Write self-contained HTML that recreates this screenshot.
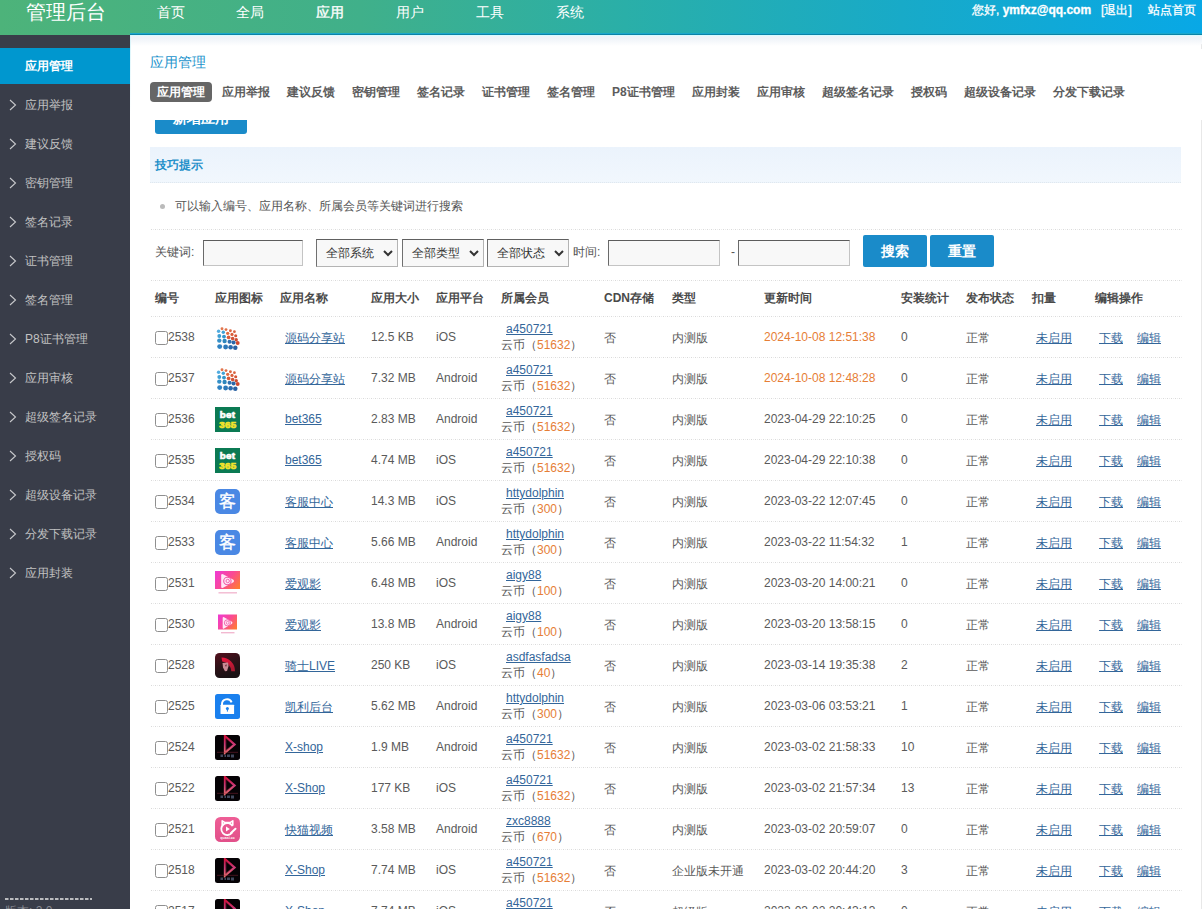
<!DOCTYPE html>
<html><head><meta charset="utf-8"><style>
*{box-sizing:border-box}
html,body{margin:0;padding:0;width:1202px;height:909px;overflow:hidden;background:#fff;font-family:"Liberation Sans",sans-serif;font-size:12px;color:#444}
.hd{position:absolute;left:0;top:0;width:1202px;height:35px;background:linear-gradient(90deg,#4db37a 0%,#40b08a 30%,#2aafa8 52%,#18aac8 75%,#08a8e6 100%)}
.hdline{position:absolute;left:130px;top:33px;width:1072px;height:2px;background:linear-gradient(#1aa8cc 0 1px,#0b82a6 1px 2px)}
.logo{position:absolute;left:26px;top:-1px;font-size:20px;line-height:26px;color:#fff}
.nav{position:absolute;top:4px;font-size:14px;line-height:16px;color:#fff}
.usr{position:absolute;top:2px;left:972px;font-size:12px;line-height:16px;color:#fff;white-space:nowrap;-webkit-text-stroke:0.3px #fff}
.sb{position:absolute;left:0;top:35px;width:130px;height:874px;background:#393d49}
.sact{position:absolute;left:0;top:48px;width:130px;height:36px;background:#0097cf;color:#fff;font-weight:bold;font-size:12px;line-height:37px;padding-left:25px}
.si{position:absolute;left:0;width:130px;height:17px;line-height:18px;font-size:12px;color:#c2c2c2;white-space:nowrap}
.si .arr{position:absolute;left:9px;top:3px}
.si span{position:absolute;left:25px;top:0}
.dash{position:absolute;left:4px;top:897px;width:90px;height:4px}
.ver{position:absolute;left:5px;top:903px;font-size:12px;line-height:17px;color:#8a8c94}
.ct{position:absolute;left:130px;top:35px;width:1072px;height:874px;background:#fff}
.shadow{position:absolute;left:130px;top:35px;width:1072px;height:14px;background:linear-gradient(#d8fbff 0 1px,#eef3f8 1px,#f0f4f9 4px,rgba(255,255,255,0) 11px)}
.ledge{position:absolute;left:130px;top:35px;width:1px;height:80px;background:linear-gradient(#d8f4fa,rgba(230,248,252,0))}
.rline{position:absolute;left:1201px;top:44px;width:1px;height:865px;background:#e8e8e8}
.addbtn{position:absolute;left:155px;top:102px;width:92px;height:32px;border-radius:3px;background:#1a8bc9;color:#fff;font-weight:bold;font-size:14px;line-height:32px;text-align:center}
.fix{position:absolute;left:130px;top:35px;width:1072px;height:85px;background:transparent}
.fixbg{position:absolute;left:130px;top:49px;width:1072px;height:71px;background:#fff}
.title{position:absolute;left:150px;top:53px;font-size:14px;line-height:18px;color:#1b93cc}
.tabs{position:absolute;left:150px;top:82px;white-space:nowrap;font-size:0}
.tab{display:inline-block;height:20px;line-height:21px;padding:0 7px;margin-right:3px;font-size:12px;font-weight:bold;color:#5c5c5c;border-radius:4px}
.tab.act{background:#666;color:#fff}
.tip{position:absolute;left:150px;top:147px;width:1031px;height:36px;background:linear-gradient(#ebf3fc,#f1f7fd);border-bottom:1px dotted #e0e8ee}
.tip span{position:absolute;left:5px;top:10px;font-weight:bold;color:#1e8fc9;font-size:12px;line-height:17px}
.bullet{position:absolute;left:160px;top:204px;width:5px;height:5px;border-radius:50%;background:#bbb}
.tiptext{position:absolute;left:175px;top:198px;line-height:17px;color:#555}
.dl{position:absolute;left:150px;width:1033px;height:1px;background:repeating-linear-gradient(90deg,transparent 0 1px,#d9d9d9 1px 2px,transparent 2px 3px,#ebebeb 3px 4px)}
.lbl{position:absolute;line-height:17px;color:#555}
.inp{position:absolute;top:240px;height:26px;background:#f8f8f8;border:1px solid #c4c4c4;border-top-color:#5c5c5c;border-left-color:#6a6a6a}
.sel{position:absolute;top:239px;height:28px;width:82px;background:#f8f8f8;border:1px solid #b4b4b4;border-top-color:#606060;border-left-color:#707070;font-size:12px;line-height:26px;padding-left:9px;color:#333}
.sel svg{position:absolute;right:4px;top:10px}
.btn{position:absolute;top:235px;width:64px;height:32px;background:#1a8bc9;border-radius:2px;color:#fff;font-size:14px;font-weight:bold;line-height:32px;text-align:center}
.th{position:absolute;top:290px;line-height:17px;font-weight:bold;color:#4a4a4a}
.c{position:absolute;line-height:17px;white-space:nowrap;color:#5a5a5a}
.lk{color:#33669a;text-decoration:underline}
.or{color:#e67e36}
.mem{line-height:16px}
.cb{position:absolute;left:155px;width:13px;height:14px;border:1px solid #8f8f8f;border-radius:2.5px;background:#fff}
.ic{position:absolute;left:215px}
</style></head><body>
<div class="hd"></div>
<div class="hdline"></div>
<div class="logo">管理后台</div>
<div class="nav" style="left:157px">首页</div>
<div class="nav" style="left:236px">全局</div>
<div class="nav" style="left:316px;-webkit-text-stroke:0.35px #fff">应用</div>
<div class="nav" style="left:396px">用户</div>
<div class="nav" style="left:476px">工具</div>
<div class="nav" style="left:556px">系统</div>
<div class="usr">您好, <b>ymfxz@qq.com</b>&nbsp;&nbsp;&nbsp;[退出]&nbsp;&nbsp;&nbsp;&nbsp;&nbsp;站点首页</div>
<div class="sb"></div>
<div class="sact">应用管理</div>
<div class="si" style="top:96px"><svg class="arr" width="8" height="12" viewBox="0 0 8 12"><path d="M1 1 L6.5 6 L1 11" fill="none" stroke="#c8c9cc" stroke-width="1.1"/></svg><span>应用举报</span></div><div class="si" style="top:135px"><svg class="arr" width="8" height="12" viewBox="0 0 8 12"><path d="M1 1 L6.5 6 L1 11" fill="none" stroke="#c8c9cc" stroke-width="1.1"/></svg><span>建议反馈</span></div><div class="si" style="top:174px"><svg class="arr" width="8" height="12" viewBox="0 0 8 12"><path d="M1 1 L6.5 6 L1 11" fill="none" stroke="#c8c9cc" stroke-width="1.1"/></svg><span>密钥管理</span></div><div class="si" style="top:213px"><svg class="arr" width="8" height="12" viewBox="0 0 8 12"><path d="M1 1 L6.5 6 L1 11" fill="none" stroke="#c8c9cc" stroke-width="1.1"/></svg><span>签名记录</span></div><div class="si" style="top:252px"><svg class="arr" width="8" height="12" viewBox="0 0 8 12"><path d="M1 1 L6.5 6 L1 11" fill="none" stroke="#c8c9cc" stroke-width="1.1"/></svg><span>证书管理</span></div><div class="si" style="top:291px"><svg class="arr" width="8" height="12" viewBox="0 0 8 12"><path d="M1 1 L6.5 6 L1 11" fill="none" stroke="#c8c9cc" stroke-width="1.1"/></svg><span>签名管理</span></div><div class="si" style="top:330px"><svg class="arr" width="8" height="12" viewBox="0 0 8 12"><path d="M1 1 L6.5 6 L1 11" fill="none" stroke="#c8c9cc" stroke-width="1.1"/></svg><span>P8证书管理</span></div><div class="si" style="top:369px"><svg class="arr" width="8" height="12" viewBox="0 0 8 12"><path d="M1 1 L6.5 6 L1 11" fill="none" stroke="#c8c9cc" stroke-width="1.1"/></svg><span>应用审核</span></div><div class="si" style="top:408px"><svg class="arr" width="8" height="12" viewBox="0 0 8 12"><path d="M1 1 L6.5 6 L1 11" fill="none" stroke="#c8c9cc" stroke-width="1.1"/></svg><span>超级签名记录</span></div><div class="si" style="top:447px"><svg class="arr" width="8" height="12" viewBox="0 0 8 12"><path d="M1 1 L6.5 6 L1 11" fill="none" stroke="#c8c9cc" stroke-width="1.1"/></svg><span>授权码</span></div><div class="si" style="top:486px"><svg class="arr" width="8" height="12" viewBox="0 0 8 12"><path d="M1 1 L6.5 6 L1 11" fill="none" stroke="#c8c9cc" stroke-width="1.1"/></svg><span>超级设备记录</span></div><div class="si" style="top:525px"><svg class="arr" width="8" height="12" viewBox="0 0 8 12"><path d="M1 1 L6.5 6 L1 11" fill="none" stroke="#c8c9cc" stroke-width="1.1"/></svg><span>分发下载记录</span></div><div class="si" style="top:564px"><svg class="arr" width="8" height="12" viewBox="0 0 8 12"><path d="M1 1 L6.5 6 L1 11" fill="none" stroke="#c8c9cc" stroke-width="1.1"/></svg><span>应用封装</span></div>
<svg class="dash" width="90" height="4" viewBox="0 0 90 4"><line x1="1" y1="2" x2="88" y2="2" stroke="#e6e6e6" stroke-width="1.7" stroke-dasharray="3.5 1.5"/></svg><div class="ver">版本: 2.0</div>
<div class="ct"></div>
<div class="rline"></div>
<div class="addbtn">新增应用</div>
<div class="fixbg"></div>
<div class="shadow"></div><div class="ledge"></div>
<div class="title">应用管理</div>
<div class="tabs"><span class="tab act">应用管理</span><span class="tab">应用举报</span><span class="tab">建议反馈</span><span class="tab">密钥管理</span><span class="tab">签名记录</span><span class="tab">证书管理</span><span class="tab">签名管理</span><span class="tab">P8证书管理</span><span class="tab">应用封装</span><span class="tab">应用审核</span><span class="tab">超级签名记录</span><span class="tab">授权码</span><span class="tab">超级设备记录</span><span class="tab">分发下载记录</span></div>
<div class="tip"><span>技巧提示</span></div>
<div class="bullet"></div>
<div class="tiptext">可以输入编号、应用名称、所属会员等关键词进行搜索</div>
<div class="dl" style="top:229px"></div>
<div class="lbl" style="left:155px;top:244px">关键词:</div>
<div class="inp" style="left:203px;width:100px"></div>
<div class="sel" style="left:316px">全部系统<svg width="10" height="7" viewBox="0 0 10 7"><path d="M1 1 L5 5 L9 1" fill="none" stroke="#333" stroke-width="2"/></svg></div>
<div class="sel" style="left:402px">全部类型<svg width="10" height="7" viewBox="0 0 10 7"><path d="M1 1 L5 5 L9 1" fill="none" stroke="#333" stroke-width="2"/></svg></div>
<div class="sel" style="left:487px">全部状态<svg width="10" height="7" viewBox="0 0 10 7"><path d="M1 1 L5 5 L9 1" fill="none" stroke="#333" stroke-width="2"/></svg></div>
<div class="lbl" style="left:573px;top:244px">时间:</div>
<div class="inp" style="left:608px;width:112px"></div>
<div class="lbl" style="left:731px;top:244px">-</div>
<div class="inp" style="left:738px;width:112px"></div>
<div class="btn" style="left:863px">搜索</div>
<div class="btn" style="left:930px">重置</div>
<div class="dl" style="top:280px"></div>
<div class="th" style="left:155px">编号</div>
<div class="th" style="left:215px">应用图标</div>
<div class="th" style="left:280px">应用名称</div>
<div class="th" style="left:371px">应用大小</div>
<div class="th" style="left:436px">应用平台</div>
<div class="th" style="left:501px">所属会员</div>
<div class="th" style="left:604px">CDN存储</div>
<div class="th" style="left:672px">类型</div>
<div class="th" style="left:764px">更新时间</div>
<div class="th" style="left:901px">安装统计</div>
<div class="th" style="left:966px">发布状态</div>
<div class="th" style="left:1032px">扣量</div>
<div class="th" style="left:1095px">编辑操作</div>
<div class="dl" style="top:316px"></div>
<div class="cb" style="top:331px"></div>
<div class="c" style="left:168px;top:329px">2538</div>
<svg class="ic" style="top:325px" width="25" height="25" viewBox="0 0 25 25"><circle cx="7.00" cy="3.70" r="1.44" fill="#e2764e"/><circle cx="11.00" cy="4.60" r="1.44" fill="#df6f48"/><circle cx="15.40" cy="5.70" r="1.44" fill="#dc6842"/><circle cx="19.40" cy="6.70" r="1.38" fill="#d9623e"/><circle cx="3.60" cy="6.30" r="1.72" fill="#52ace0"/><circle cx="8.30" cy="7.30" r="1.72" fill="#42a2d6"/><circle cx="12.70" cy="8.30" r="1.67" fill="#e06a40"/><circle cx="17.00" cy="9.40" r="1.61" fill="#db5f3a"/><circle cx="20.70" cy="10.70" r="1.55" fill="#d65637"/><circle cx="4.30" cy="11.00" r="1.95" fill="#3c9ed4"/><circle cx="9.00" cy="11.60" r="1.95" fill="#3596ca"/><circle cx="13.60" cy="12.30" r="1.84" fill="#d85a38"/><circle cx="17.60" cy="13.60" r="1.78" fill="#d15236"/><circle cx="21.20" cy="14.70" r="1.72" fill="#cc4b31"/><circle cx="4.30" cy="15.60" r="2.18" fill="#3590c8"/><circle cx="9.60" cy="16.00" r="2.18" fill="#2e86bc"/><circle cx="14.60" cy="16.70" r="2.07" fill="#2f70b0"/><circle cx="18.60" cy="17.40" r="2.01" fill="#2c67a8"/><circle cx="22.70" cy="18.00" r="1.95" fill="#d04a30"/><circle cx="4.70" cy="21.60" r="2.47" fill="#2f82c2"/><circle cx="10.60" cy="22.00" r="2.42" fill="#2c78b8"/><circle cx="15.60" cy="22.30" r="2.30" fill="#2b6aac"/><circle cx="20.30" cy="22.70" r="2.24" fill="#2a62a4"/></svg>
<a class="c lk" style="left:285px;top:330px">源码分享站</a>
<div class="c" style="left:371px;top:329px">12.5 KB</div>
<div class="c" style="left:436px;top:329px">iOS</div>
<div class="c mem" style="left:501px;top:321px"><a class="lk" style="margin-left:5px">a450721</a><br>云币（<span class="or">51632</span>）</div>
<div class="c" style="left:604px;top:330px">否</div>
<div class="c" style="left:672px;top:330px">内测版</div>
<div class="c or" style="left:764px;top:329px">2024-10-08 12:51:38</div>
<div class="c" style="left:901px;top:329px">0</div>
<div class="c" style="left:966px;top:330px">正常</div>
<a class="c lk" style="left:1036px;top:330px">未启用</a>
<a class="c lk" style="left:1099px;top:330px">下载</a>
<a class="c lk" style="left:1137px;top:330px">编辑</a>
<div class="dl" style="top:357px"></div><div class="cb" style="top:372px"></div>
<div class="c" style="left:168px;top:370px">2537</div>
<svg class="ic" style="top:366px" width="25" height="25" viewBox="0 0 25 25"><circle cx="7.00" cy="3.70" r="1.44" fill="#e2764e"/><circle cx="11.00" cy="4.60" r="1.44" fill="#df6f48"/><circle cx="15.40" cy="5.70" r="1.44" fill="#dc6842"/><circle cx="19.40" cy="6.70" r="1.38" fill="#d9623e"/><circle cx="3.60" cy="6.30" r="1.72" fill="#52ace0"/><circle cx="8.30" cy="7.30" r="1.72" fill="#42a2d6"/><circle cx="12.70" cy="8.30" r="1.67" fill="#e06a40"/><circle cx="17.00" cy="9.40" r="1.61" fill="#db5f3a"/><circle cx="20.70" cy="10.70" r="1.55" fill="#d65637"/><circle cx="4.30" cy="11.00" r="1.95" fill="#3c9ed4"/><circle cx="9.00" cy="11.60" r="1.95" fill="#3596ca"/><circle cx="13.60" cy="12.30" r="1.84" fill="#d85a38"/><circle cx="17.60" cy="13.60" r="1.78" fill="#d15236"/><circle cx="21.20" cy="14.70" r="1.72" fill="#cc4b31"/><circle cx="4.30" cy="15.60" r="2.18" fill="#3590c8"/><circle cx="9.60" cy="16.00" r="2.18" fill="#2e86bc"/><circle cx="14.60" cy="16.70" r="2.07" fill="#2f70b0"/><circle cx="18.60" cy="17.40" r="2.01" fill="#2c67a8"/><circle cx="22.70" cy="18.00" r="1.95" fill="#d04a30"/><circle cx="4.70" cy="21.60" r="2.47" fill="#2f82c2"/><circle cx="10.60" cy="22.00" r="2.42" fill="#2c78b8"/><circle cx="15.60" cy="22.30" r="2.30" fill="#2b6aac"/><circle cx="20.30" cy="22.70" r="2.24" fill="#2a62a4"/></svg>
<a class="c lk" style="left:285px;top:371px">源码分享站</a>
<div class="c" style="left:371px;top:370px">7.32 MB</div>
<div class="c" style="left:436px;top:370px">Android</div>
<div class="c mem" style="left:501px;top:362px"><a class="lk" style="margin-left:5px">a450721</a><br>云币（<span class="or">51632</span>）</div>
<div class="c" style="left:604px;top:371px">否</div>
<div class="c" style="left:672px;top:371px">内测版</div>
<div class="c or" style="left:764px;top:370px">2024-10-08 12:48:28</div>
<div class="c" style="left:901px;top:370px">0</div>
<div class="c" style="left:966px;top:371px">正常</div>
<a class="c lk" style="left:1036px;top:371px">未启用</a>
<a class="c lk" style="left:1099px;top:371px">下载</a>
<a class="c lk" style="left:1137px;top:371px">编辑</a>
<div class="dl" style="top:398px"></div><div class="cb" style="top:413px"></div>
<div class="c" style="left:168px;top:411px">2536</div>
<svg class="ic" style="top:407px" width="25" height="25" viewBox="0 0 25 25"><rect width="25" height="25" fill="#0b7a53"/><text x="12.6" y="11.2" text-anchor="middle" font-family="Liberation Sans" font-weight="bold" font-size="9.8" fill="#fff" stroke="#fff" stroke-width="0.7" letter-spacing="0.4">bet</text><text x="12.9" y="21" text-anchor="middle" font-family="Liberation Sans" font-weight="bold" font-size="9.8" fill="#f3e52b" stroke="#f3e52b" stroke-width="0.7" letter-spacing="0.4">365</text></svg>
<a class="c lk" style="left:285px;top:411px">bet365</a>
<div class="c" style="left:371px;top:411px">2.83 MB</div>
<div class="c" style="left:436px;top:411px">Android</div>
<div class="c mem" style="left:501px;top:403px"><a class="lk" style="margin-left:5px">a450721</a><br>云币（<span class="or">51632</span>）</div>
<div class="c" style="left:604px;top:412px">否</div>
<div class="c" style="left:672px;top:412px">内测版</div>
<div class="c" style="left:764px;top:411px">2023-04-29 22:10:25</div>
<div class="c" style="left:901px;top:411px">0</div>
<div class="c" style="left:966px;top:412px">正常</div>
<a class="c lk" style="left:1036px;top:412px">未启用</a>
<a class="c lk" style="left:1099px;top:412px">下载</a>
<a class="c lk" style="left:1137px;top:412px">编辑</a>
<div class="dl" style="top:439px"></div><div class="cb" style="top:454px"></div>
<div class="c" style="left:168px;top:452px">2535</div>
<svg class="ic" style="top:448px" width="25" height="25" viewBox="0 0 25 25"><rect width="25" height="25" fill="#0b7a53"/><text x="12.6" y="11.2" text-anchor="middle" font-family="Liberation Sans" font-weight="bold" font-size="9.8" fill="#fff" stroke="#fff" stroke-width="0.7" letter-spacing="0.4">bet</text><text x="12.9" y="21" text-anchor="middle" font-family="Liberation Sans" font-weight="bold" font-size="9.8" fill="#f3e52b" stroke="#f3e52b" stroke-width="0.7" letter-spacing="0.4">365</text></svg>
<a class="c lk" style="left:285px;top:452px">bet365</a>
<div class="c" style="left:371px;top:452px">4.74 MB</div>
<div class="c" style="left:436px;top:452px">iOS</div>
<div class="c mem" style="left:501px;top:444px"><a class="lk" style="margin-left:5px">a450721</a><br>云币（<span class="or">51632</span>）</div>
<div class="c" style="left:604px;top:453px">否</div>
<div class="c" style="left:672px;top:453px">内测版</div>
<div class="c" style="left:764px;top:452px">2023-04-29 22:10:38</div>
<div class="c" style="left:901px;top:452px">0</div>
<div class="c" style="left:966px;top:453px">正常</div>
<a class="c lk" style="left:1036px;top:453px">未启用</a>
<a class="c lk" style="left:1099px;top:453px">下载</a>
<a class="c lk" style="left:1137px;top:453px">编辑</a>
<div class="dl" style="top:480px"></div><div class="cb" style="top:495px"></div>
<div class="c" style="left:168px;top:493px">2534</div>
<svg class="ic" style="top:489px" width="25" height="25" viewBox="0 0 25 25"><rect width="25" height="25" rx="5" fill="#4a88e4"/><text x="12.5" y="18.3" text-anchor="middle" font-size="17" fill="#fff" stroke="#fff" stroke-width="0.35">客</text></svg>
<a class="c lk" style="left:285px;top:494px">客服中心</a>
<div class="c" style="left:371px;top:493px">14.3 MB</div>
<div class="c" style="left:436px;top:493px">iOS</div>
<div class="c mem" style="left:501px;top:485px"><a class="lk" style="margin-left:5px">httydolphin</a><br>云币（<span class="or">300</span>）</div>
<div class="c" style="left:604px;top:494px">否</div>
<div class="c" style="left:672px;top:494px">内测版</div>
<div class="c" style="left:764px;top:493px">2023-03-22 12:07:45</div>
<div class="c" style="left:901px;top:493px">0</div>
<div class="c" style="left:966px;top:494px">正常</div>
<a class="c lk" style="left:1036px;top:494px">未启用</a>
<a class="c lk" style="left:1099px;top:494px">下载</a>
<a class="c lk" style="left:1137px;top:494px">编辑</a>
<div class="dl" style="top:521px"></div><div class="cb" style="top:536px"></div>
<div class="c" style="left:168px;top:534px">2533</div>
<svg class="ic" style="top:530px" width="25" height="25" viewBox="0 0 25 25"><rect width="25" height="25" rx="5" fill="#4a88e4"/><text x="12.5" y="18.3" text-anchor="middle" font-size="17" fill="#fff" stroke="#fff" stroke-width="0.35">客</text></svg>
<a class="c lk" style="left:285px;top:535px">客服中心</a>
<div class="c" style="left:371px;top:534px">5.66 MB</div>
<div class="c" style="left:436px;top:534px">Android</div>
<div class="c mem" style="left:501px;top:526px"><a class="lk" style="margin-left:5px">httydolphin</a><br>云币（<span class="or">300</span>）</div>
<div class="c" style="left:604px;top:535px">否</div>
<div class="c" style="left:672px;top:535px">内测版</div>
<div class="c" style="left:764px;top:534px">2023-03-22 11:54:32</div>
<div class="c" style="left:901px;top:534px">1</div>
<div class="c" style="left:966px;top:535px">正常</div>
<a class="c lk" style="left:1036px;top:535px">未启用</a>
<a class="c lk" style="left:1099px;top:535px">下载</a>
<a class="c lk" style="left:1137px;top:535px">编辑</a>
<div class="dl" style="top:562px"></div><div class="cb" style="top:577px"></div>
<div class="c" style="left:168px;top:575px">2531</div>
<svg class="ic" style="top:571px" width="25" height="25" viewBox="0 0 25 25"><defs><linearGradient id="gagy" x1="0" y1="0.2" x2="1" y2="0.8"><stop offset="0" stop-color="#f03ccc"/><stop offset="0.5" stop-color="#fa4a94"/><stop offset="1" stop-color="#ff7a34"/></linearGradient></defs><rect x="0" y="0" width="25" height="18" fill="url(#gagy)"/><path d="M6.20 4.20 Q6.20 2.40 8.00 3.20 L18.40 8.80 Q19.80 10.00 18.40 11.20 L8.00 16.80 Q6.20 17.60 6.20 15.80 Z" fill="#ffe8f6"/><circle cx="12.40" cy="10.00" r="3.70" fill="none" stroke="#f25aa8" stroke-width="1.10"/><circle cx="12.70" cy="10.00" r="1.70" fill="none" stroke="#f25aa8" stroke-width="0.90"/><rect x="3.5" y="21.3" width="18.5" height="1.1" fill="#e888b0" opacity="0.75"/></svg>
<a class="c lk" style="left:285px;top:576px">爱观影</a>
<div class="c" style="left:371px;top:575px">6.48 MB</div>
<div class="c" style="left:436px;top:575px">iOS</div>
<div class="c mem" style="left:501px;top:567px"><a class="lk" style="margin-left:5px">aigy88</a><br>云币（<span class="or">100</span>）</div>
<div class="c" style="left:604px;top:576px">否</div>
<div class="c" style="left:672px;top:576px">内测版</div>
<div class="c" style="left:764px;top:575px">2023-03-20 14:00:21</div>
<div class="c" style="left:901px;top:575px">0</div>
<div class="c" style="left:966px;top:576px">正常</div>
<a class="c lk" style="left:1036px;top:576px">未启用</a>
<a class="c lk" style="left:1099px;top:576px">下载</a>
<a class="c lk" style="left:1137px;top:576px">编辑</a>
<div class="dl" style="top:603px"></div><div class="cb" style="top:618px"></div>
<div class="c" style="left:168px;top:616px">2530</div>
<svg class="ic" style="top:612px" width="25" height="25" viewBox="0 0 25 25"><defs><linearGradient id="gagy2" x1="0" y1="0.2" x2="1" y2="0.8"><stop offset="0" stop-color="#f03ccc"/><stop offset="0.5" stop-color="#fa4a94"/><stop offset="1" stop-color="#ff7a34"/></linearGradient></defs><rect x="3" y="2.5" width="19" height="15" fill="url(#gagy2)"/><path d="M7.71 6.00 Q7.71 4.50 9.08 5.17 L16.98 9.83 Q18.05 10.83 16.98 11.83 L9.08 16.50 Q7.71 17.17 7.71 15.67 Z" fill="#ffe8f6"/><circle cx="12.42" cy="10.83" r="3.08" fill="none" stroke="#f25aa8" stroke-width="0.92"/><circle cx="12.67" cy="10.83" r="1.42" fill="none" stroke="#f25aa8" stroke-width="0.75"/><rect x="6" y="20.2" width="13.5" height="1.1" fill="#e888b0" opacity="0.75"/></svg>
<a class="c lk" style="left:285px;top:617px">爱观影</a>
<div class="c" style="left:371px;top:616px">13.8 MB</div>
<div class="c" style="left:436px;top:616px">Android</div>
<div class="c mem" style="left:501px;top:608px"><a class="lk" style="margin-left:5px">aigy88</a><br>云币（<span class="or">100</span>）</div>
<div class="c" style="left:604px;top:617px">否</div>
<div class="c" style="left:672px;top:617px">内测版</div>
<div class="c" style="left:764px;top:616px">2023-03-20 13:58:15</div>
<div class="c" style="left:901px;top:616px">0</div>
<div class="c" style="left:966px;top:617px">正常</div>
<a class="c lk" style="left:1036px;top:617px">未启用</a>
<a class="c lk" style="left:1099px;top:617px">下载</a>
<a class="c lk" style="left:1137px;top:617px">编辑</a>
<div class="dl" style="top:644px"></div><div class="cb" style="top:659px"></div>
<div class="c" style="left:168px;top:657px">2528</div>
<svg class="ic" style="top:653px" width="25" height="25" viewBox="0 0 25 25"><defs><linearGradient id="gk" x1="0" y1="0" x2="0.4" y2="1"><stop offset="0" stop-color="#54101e"/><stop offset="0.6" stop-color="#2a1217"/><stop offset="1" stop-color="#1a1214"/></linearGradient><linearGradient id="gk2" x1="0" y1="0" x2="0.3" y2="1"><stop offset="0" stop-color="#f0143e"/><stop offset="1" stop-color="#a81a30"/></linearGradient></defs><rect width="25" height="25" rx="4.5" fill="url(#gk)"/><path d="M6.5 4.6 A13.5 13.5 0 0 1 20 18.2 L16.3 18.2 A10 10 0 0 0 7.2 8.6 Z" fill="url(#gk2)"/><path d="M7.5 10 L13 9.6 L13.6 13 L12 18 L10 18.2 L8 14.5 Z" fill="#c88a94"/><path d="M10 12 L12 11.6 L11 14 Z" fill="#6a2a34"/></svg>
<a class="c lk" style="left:285px;top:658px">骑士LIVE</a>
<div class="c" style="left:371px;top:657px">250 KB</div>
<div class="c" style="left:436px;top:657px">iOS</div>
<div class="c mem" style="left:501px;top:649px"><a class="lk" style="margin-left:5px">asdfasfadsa</a><br>云币（<span class="or">40</span>）</div>
<div class="c" style="left:604px;top:658px">否</div>
<div class="c" style="left:672px;top:658px">内测版</div>
<div class="c" style="left:764px;top:657px">2023-03-14 19:35:38</div>
<div class="c" style="left:901px;top:657px">2</div>
<div class="c" style="left:966px;top:658px">正常</div>
<a class="c lk" style="left:1036px;top:658px">未启用</a>
<a class="c lk" style="left:1099px;top:658px">下载</a>
<a class="c lk" style="left:1137px;top:658px">编辑</a>
<div class="dl" style="top:685px"></div><div class="cb" style="top:700px"></div>
<div class="c" style="left:168px;top:698px">2525</div>
<svg class="ic" style="top:694px" width="25" height="25" viewBox="0 0 25 25"><rect width="25" height="25" rx="2.5" fill="#1a80ee"/><path d="M7 11.5 V10.5 A5 5 0 0 1 16.6 8.3" fill="none" stroke="#fff" stroke-width="2"/><rect x="5.5" y="10.8" width="13.6" height="9.3" rx="0.5" fill="#fff"/><circle cx="12.4" cy="14.6" r="1.5" fill="#1a80ee"/><rect x="11.9" y="14.8" width="1" height="2.8" fill="#1a80ee"/></svg>
<a class="c lk" style="left:285px;top:699px">凯利后台</a>
<div class="c" style="left:371px;top:698px">5.62 MB</div>
<div class="c" style="left:436px;top:698px">Android</div>
<div class="c mem" style="left:501px;top:690px"><a class="lk" style="margin-left:5px">httydolphin</a><br>云币（<span class="or">300</span>）</div>
<div class="c" style="left:604px;top:699px">否</div>
<div class="c" style="left:672px;top:699px">内测版</div>
<div class="c" style="left:764px;top:698px">2023-03-06 03:53:21</div>
<div class="c" style="left:901px;top:698px">1</div>
<div class="c" style="left:966px;top:699px">正常</div>
<a class="c lk" style="left:1036px;top:699px">未启用</a>
<a class="c lk" style="left:1099px;top:699px">下载</a>
<a class="c lk" style="left:1137px;top:699px">编辑</a>
<div class="dl" style="top:726px"></div><div class="cb" style="top:741px"></div>
<div class="c" style="left:168px;top:739px">2524</div>
<svg class="ic" style="top:735px" width="25" height="25" viewBox="0 0 25 25"><defs><linearGradient id="gx" x1="0" y1="0" x2="0" y2="1"><stop offset="0" stop-color="#d0103c"/><stop offset="0.5" stop-color="#c83a78"/><stop offset="1" stop-color="#e86a70"/></linearGradient></defs><rect width="25" height="25" rx="2.5" fill="#050205"/><path d="M10 1.2 V17.5 L19.5 9.5 Z" fill="none" stroke="url(#gx)" stroke-width="2.3" stroke-linejoin="miter"/><path d="M10.8 3.5 V15.5 L17.5 9.5 Z" fill="none" stroke="#3a0a1a" stroke-width="0.6"/><path d="M2 17.3 H23" stroke="#8a2a3a" stroke-width="0.7" opacity="0.7"/><g opacity="0.6"><rect x="5.5" y="19.5" width="2.5" height="2.5" fill="#6a7898"/><rect x="9.5" y="19.5" width="1.5" height="2.5" fill="#6a7898"/><rect x="12" y="19.5" width="3" height="2.5" fill="#6a7898"/><rect x="16" y="19.5" width="3" height="3" fill="#6a7898"/></g></svg>
<a class="c lk" style="left:285px;top:739px">X-shop</a>
<div class="c" style="left:371px;top:739px">1.9 MB</div>
<div class="c" style="left:436px;top:739px">Android</div>
<div class="c mem" style="left:501px;top:731px"><a class="lk" style="margin-left:5px">a450721</a><br>云币（<span class="or">51632</span>）</div>
<div class="c" style="left:604px;top:740px">否</div>
<div class="c" style="left:672px;top:740px">内测版</div>
<div class="c" style="left:764px;top:739px">2023-03-02 21:58:33</div>
<div class="c" style="left:901px;top:739px">10</div>
<div class="c" style="left:966px;top:740px">正常</div>
<a class="c lk" style="left:1036px;top:740px">未启用</a>
<a class="c lk" style="left:1099px;top:740px">下载</a>
<a class="c lk" style="left:1137px;top:740px">编辑</a>
<div class="dl" style="top:767px"></div><div class="cb" style="top:782px"></div>
<div class="c" style="left:168px;top:780px">2522</div>
<svg class="ic" style="top:776px" width="25" height="25" viewBox="0 0 25 25"><defs><linearGradient id="gx" x1="0" y1="0" x2="0" y2="1"><stop offset="0" stop-color="#d0103c"/><stop offset="0.5" stop-color="#c83a78"/><stop offset="1" stop-color="#e86a70"/></linearGradient></defs><rect width="25" height="25" rx="2.5" fill="#050205"/><path d="M10 1.2 V17.5 L19.5 9.5 Z" fill="none" stroke="url(#gx)" stroke-width="2.3" stroke-linejoin="miter"/><path d="M10.8 3.5 V15.5 L17.5 9.5 Z" fill="none" stroke="#3a0a1a" stroke-width="0.6"/><path d="M2 17.3 H23" stroke="#8a2a3a" stroke-width="0.7" opacity="0.7"/><g opacity="0.6"><rect x="5.5" y="19.5" width="2.5" height="2.5" fill="#6a7898"/><rect x="9.5" y="19.5" width="1.5" height="2.5" fill="#6a7898"/><rect x="12" y="19.5" width="3" height="2.5" fill="#6a7898"/><rect x="16" y="19.5" width="3" height="3" fill="#6a7898"/></g></svg>
<a class="c lk" style="left:285px;top:780px">X-Shop</a>
<div class="c" style="left:371px;top:780px">177 KB</div>
<div class="c" style="left:436px;top:780px">iOS</div>
<div class="c mem" style="left:501px;top:772px"><a class="lk" style="margin-left:5px">a450721</a><br>云币（<span class="or">51632</span>）</div>
<div class="c" style="left:604px;top:781px">否</div>
<div class="c" style="left:672px;top:781px">内测版</div>
<div class="c" style="left:764px;top:780px">2023-03-02 21:57:34</div>
<div class="c" style="left:901px;top:780px">13</div>
<div class="c" style="left:966px;top:781px">正常</div>
<a class="c lk" style="left:1036px;top:781px">未启用</a>
<a class="c lk" style="left:1099px;top:781px">下载</a>
<a class="c lk" style="left:1137px;top:781px">编辑</a>
<div class="dl" style="top:808px"></div><div class="cb" style="top:823px"></div>
<div class="c" style="left:168px;top:821px">2521</div>
<svg class="ic" style="top:817px" width="25" height="25" viewBox="0 0 25 25"><defs><linearGradient id="gc" x1="0" y1="0" x2="0" y2="1"><stop offset="0" stop-color="#ee5e96"/><stop offset="1" stop-color="#e2508a"/></linearGradient></defs><rect width="25" height="25" rx="5.5" fill="url(#gc)"/><path d="M7.2 8.5 L7.2 3.8 L10 5.6 L15 5.6 L17.8 3.8 L17.8 8.5" fill="none" stroke="#fff" stroke-width="1.6" stroke-linejoin="round"/><path d="M17.6 9.2 A6 6 0 1 0 17.2 15.5" fill="none" stroke="#fff" stroke-width="1.8"/><path d="M16 16 L20.5 11.8" stroke="#fff" stroke-width="2" stroke-linecap="round"/><path d="M11 9.6 L14.8 12 L11 14.4 Z" fill="#fff"/><text x="12.5" y="22.3" text-anchor="middle" font-family="Liberation Sans" font-weight="bold" font-size="3.6" fill="#fff">quasi.cc</text></svg>
<a class="c lk" style="left:285px;top:822px">快猫视频</a>
<div class="c" style="left:371px;top:821px">3.58 MB</div>
<div class="c" style="left:436px;top:821px">Android</div>
<div class="c mem" style="left:501px;top:813px"><a class="lk" style="margin-left:5px">zxc8888</a><br>云币（<span class="or">670</span>）</div>
<div class="c" style="left:604px;top:822px">否</div>
<div class="c" style="left:672px;top:822px">内测版</div>
<div class="c" style="left:764px;top:821px">2023-03-02 20:59:07</div>
<div class="c" style="left:901px;top:821px">0</div>
<div class="c" style="left:966px;top:822px">正常</div>
<a class="c lk" style="left:1036px;top:822px">未启用</a>
<a class="c lk" style="left:1099px;top:822px">下载</a>
<a class="c lk" style="left:1137px;top:822px">编辑</a>
<div class="dl" style="top:849px"></div><div class="cb" style="top:864px"></div>
<div class="c" style="left:168px;top:862px">2518</div>
<svg class="ic" style="top:858px" width="25" height="25" viewBox="0 0 25 25"><defs><linearGradient id="gx" x1="0" y1="0" x2="0" y2="1"><stop offset="0" stop-color="#d0103c"/><stop offset="0.5" stop-color="#c83a78"/><stop offset="1" stop-color="#e86a70"/></linearGradient></defs><rect width="25" height="25" rx="2.5" fill="#050205"/><path d="M10 1.2 V17.5 L19.5 9.5 Z" fill="none" stroke="url(#gx)" stroke-width="2.3" stroke-linejoin="miter"/><path d="M10.8 3.5 V15.5 L17.5 9.5 Z" fill="none" stroke="#3a0a1a" stroke-width="0.6"/><path d="M2 17.3 H23" stroke="#8a2a3a" stroke-width="0.7" opacity="0.7"/><g opacity="0.6"><rect x="5.5" y="19.5" width="2.5" height="2.5" fill="#6a7898"/><rect x="9.5" y="19.5" width="1.5" height="2.5" fill="#6a7898"/><rect x="12" y="19.5" width="3" height="2.5" fill="#6a7898"/><rect x="16" y="19.5" width="3" height="3" fill="#6a7898"/></g></svg>
<a class="c lk" style="left:285px;top:862px">X-Shop</a>
<div class="c" style="left:371px;top:862px">7.74 MB</div>
<div class="c" style="left:436px;top:862px">iOS</div>
<div class="c mem" style="left:501px;top:854px"><a class="lk" style="margin-left:5px">a450721</a><br>云币（<span class="or">51632</span>）</div>
<div class="c" style="left:604px;top:863px">否</div>
<div class="c" style="left:672px;top:863px">企业版未开通</div>
<div class="c" style="left:764px;top:862px">2023-03-02 20:44:20</div>
<div class="c" style="left:901px;top:862px">3</div>
<div class="c" style="left:966px;top:863px">正常</div>
<a class="c lk" style="left:1036px;top:863px">未启用</a>
<a class="c lk" style="left:1099px;top:863px">下载</a>
<a class="c lk" style="left:1137px;top:863px">编辑</a>
<div class="dl" style="top:890px"></div><div class="cb" style="top:905px"></div>
<div class="c" style="left:168px;top:903px">2517</div>
<svg class="ic" style="top:899px" width="25" height="25" viewBox="0 0 25 25"><defs><linearGradient id="gx" x1="0" y1="0" x2="0" y2="1"><stop offset="0" stop-color="#d0103c"/><stop offset="0.5" stop-color="#c83a78"/><stop offset="1" stop-color="#e86a70"/></linearGradient></defs><rect width="25" height="25" rx="2.5" fill="#050205"/><path d="M10 1.2 V17.5 L19.5 9.5 Z" fill="none" stroke="url(#gx)" stroke-width="2.3" stroke-linejoin="miter"/><path d="M10.8 3.5 V15.5 L17.5 9.5 Z" fill="none" stroke="#3a0a1a" stroke-width="0.6"/><path d="M2 17.3 H23" stroke="#8a2a3a" stroke-width="0.7" opacity="0.7"/><g opacity="0.6"><rect x="5.5" y="19.5" width="2.5" height="2.5" fill="#6a7898"/><rect x="9.5" y="19.5" width="1.5" height="2.5" fill="#6a7898"/><rect x="12" y="19.5" width="3" height="2.5" fill="#6a7898"/><rect x="16" y="19.5" width="3" height="3" fill="#6a7898"/></g></svg>
<a class="c lk" style="left:285px;top:903px">X-Shop</a>
<div class="c" style="left:371px;top:903px">7.74 MB</div>
<div class="c" style="left:436px;top:903px">iOS</div>
<div class="c mem" style="left:501px;top:895px"><a class="lk" style="margin-left:5px">a450721</a><br>云币（<span class="or">51632</span>）</div>
<div class="c" style="left:604px;top:904px">否</div>
<div class="c" style="left:672px;top:904px">超级版</div>
<div class="c" style="left:764px;top:903px">2023-03-02 20:43:13</div>
<div class="c" style="left:901px;top:903px">0</div>
<div class="c" style="left:966px;top:904px">正常</div>
<a class="c lk" style="left:1036px;top:904px">未启用</a>
<a class="c lk" style="left:1099px;top:904px">下载</a>
<a class="c lk" style="left:1137px;top:904px">编辑</a>
<div class="dl" style="top:931px"></div>
</body></html>
